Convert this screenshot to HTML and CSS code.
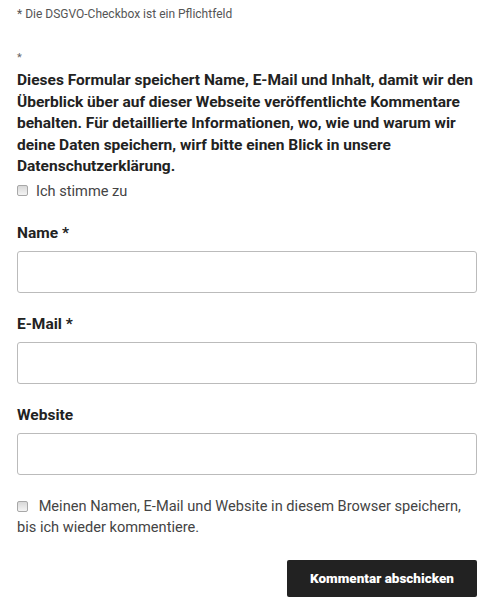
FILE: index.html
```html
<!DOCTYPE html>
<html lang="de">
<head>
    <meta charset="UTF-8" />
    <title>Kommentar schreiben</title>
    <link rel="stylesheet" href="styles.css">
</head>
<body>
    <form class="comment-form">
        <p class="gdpr-note">* Die DSGVO-Checkbox ist ein Pflichtfeld</p>

        <div class="gdpr-box">
            <p class="star">*</p>
            <p class="gdpr-text">Dieses Formular speichert Name, E-Mail und Inhalt, damit wir den Überblick über auf dieser Webseite veröffentlichte Kommentare behalten. Für detaillierte Informationen, wo, wie und warum wir deine Daten speichern, wirf bitte einen Blick in unsere Datenschutzerklärung.</p>
            <label class="check">
                <input type="checkbox" />
                <span>Ich stimme zu</span>
            </label>
        </div>

        <div class="field first">
            <label for="author">Name *</label>
            <input type="text" id="author" />
        </div>

        <div class="field">
            <label for="email">E-Mail *</label>
            <input type="email" id="email" />
        </div>

        <div class="field">
            <label for="url">Website</label>
            <input type="url" id="url" />
        </div>

        <p class="cookies">
            <input type="checkbox" id="cookies" />
            <label for="cookies">Meinen Namen, E-Mail und Website in diesem Browser speichern, bis ich wieder kommentiere.</label>
        </p>

        <div class="submit-row">
            <button type="submit">Kommentar abschicken</button>
        </div>
    </form>
</body>
</html>
```

FILE: styles.css
```css
body {
    margin: 0;
    background: #fff;
    color: #444;
    font-family: Roboto, Arial, sans-serif;
}

.comment-form {
    padding: 7px 23px 0 17px;
}

p {
    margin: 0;
}

.gdpr-note {
    font-size: 12px;
    color: #555;
}

.star {
    margin-top: 30px;
    font-size: 11px;
    line-height: 14px;
    color: #666;
}

.gdpr-text {
    margin-top: 5px;
    font-size: 15.5px;
    font-weight: 700;
    line-height: 21.5px;
    color: #222;
}

.check {
    display: flex;
    align-items: center;
    gap: 8px;
    margin-top: 4px;
    font-size: 14.6px;
}

/* old-style grey checkbox */
input[type="checkbox"] {
    appearance: none;
    margin: 0;
    width: 11px;
    height: 11px;
    border: 1px solid #a8a8a8;
    border-radius: 2px;
    background: linear-gradient(#d8d8d8, #f4f4f4);
}

.field {
    margin-top: 22px;
}

.field.first {
    margin-top: 24px;
}

.field label {
    display: block;
    font-size: 15.5px;
    font-weight: 700;
    color: #222;
    margin-bottom: 9px;
}

.field input {
    display: block;
    box-sizing: border-box;
    width: 100%;
    height: 42px;
    border: 1px solid #bbb;
    border-radius: 3px;
    background: #fff;
}

.cookies {
    margin-top: 21px;
    font-size: 14.6px;
    line-height: 21px;
}

.cookies input {
    vertical-align: -1px;
    margin-right: 7px;
}

.submit-row {
    display: flex;
    justify-content: flex-end;
    margin-top: 22px;
}

button {
    width: 190px;
    height: 37px;
    border: none;
    border-radius: 2px;
    background: #222;
    color: #fff;
    font-family: inherit;
    font-size: 13.5px;
    font-weight: 900;
}
```
